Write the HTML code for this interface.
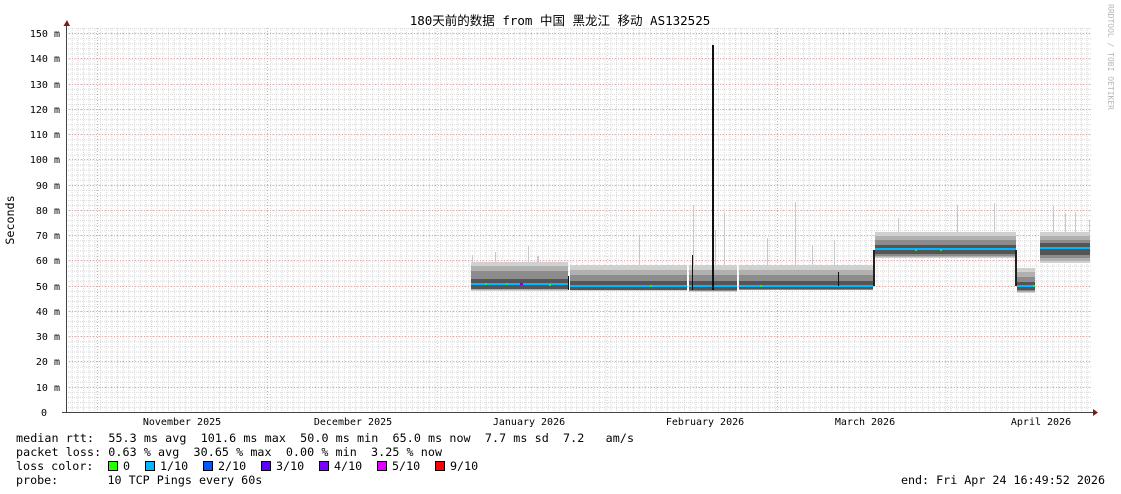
<!DOCTYPE html>
<html><head><meta charset="utf-8"><style>
html,body{margin:0;padding:0;background:#fff;width:1121px;height:494px;overflow:hidden}
svg{display:block}
text{font-family:"DejaVu Sans Mono","Liberation Mono","Noto Sans CJK SC",monospace;font-size:11.7px;fill:#000}
.t{font-size:12.5px}
.s{font-size:10px}
</style></head><body>
<svg width="1121" height="494" viewBox="0 0 1121 494" xmlns="http://www.w3.org/2000/svg">
<defs>
<pattern id="vg" x="66" y="0" width="5.67" height="494" patternUnits="userSpaceOnUse">
<line x1="0.5" y1="0" x2="0.5" y2="494" stroke="#d8d8d8" stroke-dasharray="1,1"/>
</pattern>
<pattern id="hg" x="0" y="412" width="1121" height="5.05" patternUnits="userSpaceOnUse">
<line x1="0" y1="0.5" x2="1121" y2="0.5" stroke="#d8d8d8" stroke-dasharray="1,1"/>
</pattern>
</defs>
<rect x="0" y="0" width="1121" height="494" fill="#fff"/>
<rect x="66" y="28" width="1026" height="384" fill="url(#vg)"/>
<rect x="66" y="28" width="1026" height="384" fill="url(#hg)"/>
<g stroke="#f0a0a0" stroke-dasharray="1,2">
<line x1="66" y1="33.5" x2="1092" y2="33.5"/><line x1="66" y1="58.5" x2="1092" y2="58.5"/><line x1="66" y1="84.5" x2="1092" y2="84.5"/><line x1="66" y1="109.5" x2="1092" y2="109.5"/><line x1="66" y1="134.5" x2="1092" y2="134.5"/><line x1="66" y1="159.5" x2="1092" y2="159.5"/><line x1="66" y1="185.5" x2="1092" y2="185.5"/><line x1="66" y1="210.5" x2="1092" y2="210.5"/><line x1="66" y1="235.5" x2="1092" y2="235.5"/><line x1="66" y1="260.5" x2="1092" y2="260.5"/><line x1="66" y1="286.5" x2="1092" y2="286.5"/><line x1="66" y1="311.5" x2="1092" y2="311.5"/><line x1="66" y1="336.5" x2="1092" y2="336.5"/><line x1="66" y1="361.5" x2="1092" y2="361.5"/><line x1="66" y1="387.5" x2="1092" y2="387.5"/>
<line x1="97.5" y1="28" x2="97.5" y2="412"/><line x1="267.5" y1="28" x2="267.5" y2="412"/><line x1="777.5" y1="28" x2="777.5" y2="412"/>
</g>
<g stroke="#f4c8c8" stroke-dasharray="1,2">
<line x1="437.5" y1="28" x2="437.5" y2="412"/><line x1="607.5" y1="28" x2="607.5" y2="412"/><line x1="947.5" y1="28" x2="947.5" y2="412"/>
</g>
<g fill="#c8c8c8">
<rect x="472" y="255" width="1" height="10"/><rect x="495" y="252" width="1" height="12"/><rect x="528" y="246" width="1" height="18"/><rect x="537" y="256" width="2" height="10"/>
<rect x="639" y="235" width="1" height="30"/><rect x="693" y="205" width="1" height="60"/><rect x="715" y="230" width="1" height="35"/><rect x="724" y="213" width="1" height="52"/>
<rect x="767" y="238" width="1" height="27"/><rect x="795" y="202" width="1" height="63"/><rect x="812" y="245" width="1" height="20"/><rect x="834" y="240" width="1" height="25"/>
<rect x="898" y="218" width="1" height="14"/><rect x="957" y="205" width="1" height="27"/><rect x="994" y="203" width="1" height="29"/><rect x="1053" y="206" width="1" height="26"/><rect x="1065" y="213" width="1" height="19"/><rect x="1075" y="212" width="1" height="20"/><rect x="1089" y="220" width="1" height="12"/>
</g>
<g>
<rect x="471" y="262" width="97" height="29" fill="#d0d0d0"/><rect x="471" y="266" width="97" height="24" fill="#b0b0b0"/><rect x="471" y="271" width="97" height="18" fill="#8c8c8c"/><rect x="471" y="279" width="97" height="10" fill="#555"/><rect x="471" y="283" width="97" height="2" fill="#00b8ff"/>
<rect x="570" y="265" width="117" height="26" fill="#d0d0d0"/><rect x="570" y="270" width="117" height="20" fill="#b0b0b0"/><rect x="570" y="275" width="117" height="15" fill="#8c8c8c"/><rect x="570" y="281" width="117" height="9" fill="#555"/><rect x="570" y="285" width="117" height="2" fill="#00b8ff"/>
<rect x="689" y="265" width="48" height="27" fill="#d0d0d0"/><rect x="689" y="270" width="48" height="21" fill="#b0b0b0"/><rect x="689" y="275" width="48" height="16" fill="#8c8c8c"/><rect x="689" y="281" width="48" height="9" fill="#555"/><rect x="689" y="285" width="48" height="2" fill="#00b8ff"/>
<rect x="739" y="265" width="134" height="25" fill="#d0d0d0"/><rect x="739" y="270" width="134" height="20" fill="#b0b0b0"/><rect x="739" y="275" width="134" height="15" fill="#8c8c8c"/><rect x="739" y="281" width="134" height="8" fill="#555"/><rect x="739" y="285" width="134" height="2" fill="#00b8ff"/>
<rect x="875" y="232" width="141" height="26" fill="#d0d0d0"/><rect x="875" y="236" width="141" height="21" fill="#b0b0b0"/><rect x="875" y="240" width="141" height="16" fill="#8c8c8c"/><rect x="875" y="245" width="141" height="9" fill="#555"/><rect x="875" y="248" width="141" height="2" fill="#00b8ff"/>
<rect x="1017" y="268" width="18" height="25" fill="#d0d0d0"/><rect x="1017" y="272" width="18" height="20" fill="#b0b0b0"/><rect x="1017" y="277" width="18" height="14" fill="#8c8c8c"/><rect x="1017" y="282" width="18" height="8" fill="#555"/><rect x="1017" y="285" width="18" height="2" fill="#00b8ff"/>
<rect x="1040" y="232" width="50" height="31" fill="#d0d0d0"/><rect x="1040" y="236" width="50" height="25" fill="#b0b0b0"/><rect x="1040" y="240" width="50" height="18" fill="#8c8c8c"/><rect x="1040" y="243" width="50" height="12" fill="#555"/><rect x="1040" y="247" width="50" height="2" fill="#00b8ff"/>
<rect x="873" y="250" width="2" height="36" fill="#222"/><rect x="1015" y="250" width="2" height="36" fill="#222"/>
</g>
<g fill="#22ee22"><rect x="485" y="283" width="2" height="2"/><rect x="506" y="283" width="2" height="2"/><rect x="549" y="284" width="2" height="2"/><rect x="650" y="285" width="2" height="2"/><rect x="760" y="285" width="2" height="2"/><rect x="915" y="249" width="2" height="2"/><rect x="940" y="249" width="2" height="2"/><rect x="1033" y="285" width="2" height="2"/></g>
<rect x="520" y="283" width="3" height="2" fill="#7a00ff"/>
<rect x="712" y="45" width="2" height="245" fill="#111"/><rect x="692" y="255" width="1" height="35" fill="#111"/><rect x="838" y="272" width="1" height="14" fill="#111"/><rect x="568" y="276" width="1" height="14" fill="#111"/>
<line x1="66.5" y1="24" x2="66.5" y2="413" stroke="#444"/>
<line x1="62" y1="412.5" x2="1094" y2="412.5" stroke="#444"/>
<path d="M63.5 26 L67 20 L70 26 Z" fill="#7a1a1a"/>
<path d="M1093 409 L1098 412.5 L1093 416 Z" fill="#7a1a1a"/>
<g text-anchor="end">
<text class="s" x="60" y="37">150 m</text><text class="s" x="60" y="62">140 m</text><text class="s" x="60" y="88">130 m</text><text class="s" x="60" y="113">120 m</text><text class="s" x="60" y="138">110 m</text><text class="s" x="60" y="163">100 m</text><text class="s" x="60" y="189">90 m</text><text class="s" x="60" y="214">80 m</text><text class="s" x="60" y="239">70 m</text><text class="s" x="60" y="264">60 m</text><text class="s" x="60" y="290">50 m</text><text class="s" x="60" y="315">40 m</text><text class="s" x="60" y="340">30 m</text><text class="s" x="60" y="365">20 m</text><text class="s" x="60" y="391">10 m</text><text class="s" x="47" y="416">0</text>
</g>
<g text-anchor="middle">
<text x="182" y="425" class="s">November 2025</text><text x="353" y="425" class="s">December 2025</text><text x="529" y="425" class="s">January 2026</text><text x="705" y="425" class="s">February 2026</text><text x="865" y="425" class="s">March 2026</text><text x="1041" y="425" class="s">April 2026</text>
</g>
<text x="560" y="25" text-anchor="middle" class="t">180天前的数据 from 中国 黑龙江 移动 AS132525</text>
<text transform="translate(14,220) rotate(-90)" text-anchor="middle">Seconds</text>
<text transform="translate(1108,4) rotate(90)" style="font-size:8px;fill:#b8b8b8">RRDTOOL / TOBI OETIKER</text>
<text x="16" y="442" xml:space="preserve" textLength="618">median rtt:  55.3 ms avg  101.6 ms max  50.0 ms min  65.0 ms now  7.7 ms sd  7.2   am/s</text>
<text x="16" y="456" xml:space="preserve" textLength="426">packet loss: 0.63 % avg  30.65 % max  0.00 % min  3.25 % now</text>
<text x="16" y="470" xml:space="preserve">loss color:  </text>
<g stroke="#000">
<rect x="108.5" y="461.5" width="9" height="9" fill="#26ff00"/>
<rect x="145.5" y="461.5" width="9" height="9" fill="#00b8ff"/>
<rect x="203.5" y="461.5" width="9" height="9" fill="#0059ff"/>
<rect x="261.5" y="461.5" width="9" height="9" fill="#5e00ff"/>
<rect x="319.5" y="461.5" width="9" height="9" fill="#7e00ff"/>
<rect x="377.5" y="461.5" width="9" height="9" fill="#dd00ff"/>
<rect x="435.5" y="461.5" width="9" height="9" fill="#ff0000"/>
</g>
<text x="123" y="470">0</text><text x="160" y="470">1/10</text><text x="218" y="470">2/10</text><text x="276" y="470">3/10</text><text x="334" y="470">4/10</text><text x="392" y="470">5/10</text><text x="450" y="470">9/10</text>
<text x="16" y="484" xml:space="preserve">probe:       10 TCP Pings every 60s</text>
<text x="1105" y="484" text-anchor="end">end: Fri Apr 24 16:49:52 2026</text>
</svg>
</body></html>
